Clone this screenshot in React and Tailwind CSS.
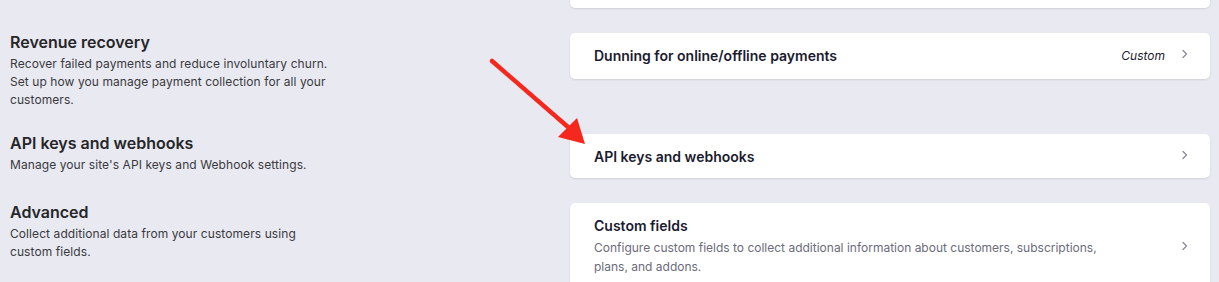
import React from "react";

const Chevron = () => (
  <svg width="8" height="10" viewBox="0 0 8 10" fill="none" className="shrink-0">
    <path d="M2 1.5 L5.5 5 L2 8.5" stroke="#8b8b99" strokeWidth="1.3" strokeLinecap="round" strokeLinejoin="round" />
  </svg>
);

const Card = ({ children, className = "" }) => (
  <div className={"bg-white rounded-[5px] shadow-[0_1px_2px_rgba(30,30,60,0.12)] " + className}>{children}</div>
);

const LeftInfo = ({ title, desc }) => (
  <div className="w-[322px] -mt-px">
    <div className="text-[16px] leading-[20px] font-semibold text-[#262628]">{title}</div>
    <div className="mt-[3px] text-[12px] leading-[18px] tracking-[0.08px] text-[#3a3a3e]">{desc}</div>
  </div>
);

export default function App() {
  return (
    <div
      className="relative w-[1219px] h-[282px] overflow-hidden bg-[#e9e9f1]"
      style={{ fontFamily: "Inter, 'Noto Sans', sans-serif" }}
    >
      <div className="flex flex-col gap-[25px] pl-[10px] pr-[9px]">
        {/* top partially visible row */}
        <div className="flex">
          <div className="w-[560px] shrink-0" />
          <Card className="flex-1 h-[46px] -mt-[38px]" />
        </div>

        {/* Revenue recovery */}
        <div className="flex items-start">
          <div className="w-[560px] shrink-0">
            <LeftInfo
              title="Revenue recovery"
              desc="Recover failed payments and reduce involuntary churn. Set up how you manage payment collection for all your customers."
            />
          </div>
          <Card className="flex-1 flex items-center h-[46px] pl-6 pr-[21px]">
            <div className="flex-1 text-[14px] leading-[20px] font-semibold text-[#1b1b2f]">
              Dunning for online/offline payments
            </div>
            <div className="text-[12px] italic text-[#1b1b2f] mr-[16px] -mt-px">Custom</div>
            <div className="-mt-[4px]"><Chevron /></div>
          </Card>
        </div>

        {/* API keys */}
        <div className="flex items-start">
          <div className="w-[560px] shrink-0">
            <LeftInfo title="API keys and webhooks" desc="Manage your site's API keys and Webhook settings." />
          </div>
          <Card className="flex-1 flex items-center h-[44px] pl-6 pr-[21px]">
            <div className="flex-1 text-[14px] leading-[20px] font-semibold text-[#1b1b2f] mt-[2px]">
              API keys and webhooks
            </div>
            <div className="-mt-[2px]"><Chevron /></div>
          </Card>
        </div>

        {/* Advanced */}
        <div className="flex items-start">
          <div className="w-[560px] shrink-0">
            <LeftInfo
              title="Advanced"
              desc="Collect additional data from your customers using custom fields."
            />
          </div>
          <Card className="flex-1 flex items-center pl-6 pr-[21px] pt-[13px] pb-[14px]">
            <div className="flex-1">
              <div className="text-[14px] leading-[20px] font-semibold text-[#1b1b2f]">Custom fields</div>
              <div className="mt-[2px] max-w-[520px] text-[12px] leading-[19px] text-[#6b6b7b]">
                Configure custom fields to collect additional information about customers, subscriptions, plans, and addons.
              </div>
            </div>
            <Chevron />
          </Card>
        </div>
      </div>

      {/* annotation arrow */}
      <svg className="absolute left-0 top-0 pointer-events-none" width="1219" height="282">
        <line x1="492" y1="61" x2="568" y2="127" stroke="#f5281e" strokeWidth="4.5" strokeLinecap="round" />
        <polygon points="577,118 558,137 585,144" fill="#f5281e" />
      </svg>
    </div>
  );
}
